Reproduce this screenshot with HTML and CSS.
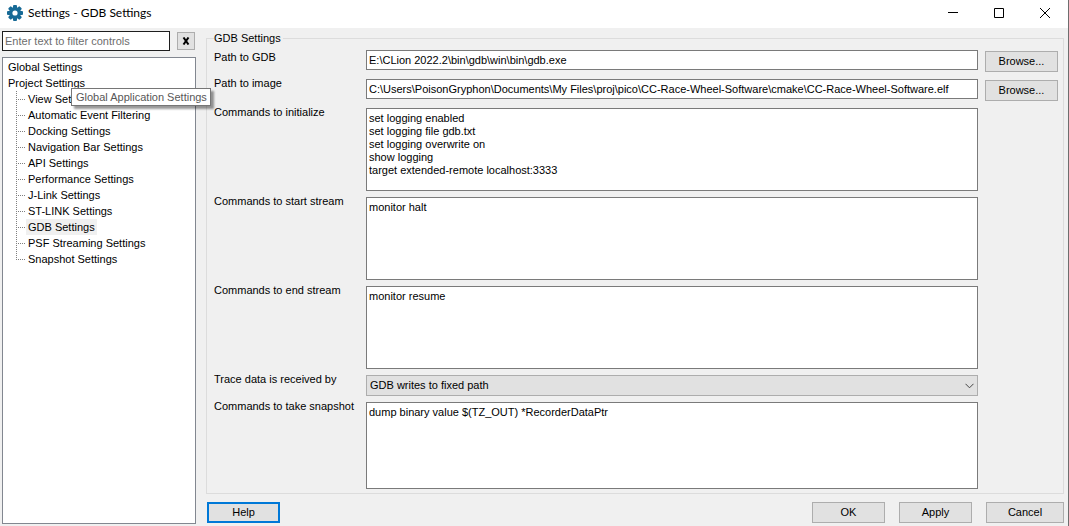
FILE: index.html
```html
<!DOCTYPE html>
<html lang="en">
<head>
<meta charset="utf-8">
<title>Settings - GDB Settings</title>
<link rel="stylesheet" href="styles.css">
</head>
<body>
<div class="window">
  <header class="titlebar">
    <svg class="gear" viewBox="0 0 16 16" aria-hidden="true">
      <g fill="#176a96">
        <rect x="6" y="0" width="4" height="16" rx="1"/>
        <rect x="6" y="0" width="4" height="16" rx="1" transform="rotate(45 8 8)"/>
        <rect x="6" y="0" width="4" height="16" rx="1" transform="rotate(90 8 8)"/>
        <rect x="6" y="0" width="4" height="16" rx="1" transform="rotate(135 8 8)"/>
        <circle cx="8" cy="8" r="6"/>
      </g>
      <circle cx="8" cy="8" r="2.6" fill="#fff"/>
    </svg>
    <h1 class="title">Settings - GDB Settings</h1>
    <div class="caption">
      <button class="caption-button" type="button" aria-label="Minimize"><svg viewBox="0 0 10 10"><path d="M0 4.5H10"/></svg></button>
      <button class="caption-button" type="button" aria-label="Maximize"><svg viewBox="0 0 10 10"><path d="M.5 .5H9.5V9.5H.5Z"/></svg></button>
      <button class="caption-button" type="button" aria-label="Close"><svg viewBox="0 0 10 10"><path d="M0 0L10 10M10 0L0 10"/></svg></button>
    </div>
  </header>
  <div class="content">
    <aside class="sidebar">
      <div class="filter">
        <input class="filter-input" type="text" placeholder="Enter text to filter controls" aria-label="Filter controls">
        <button class="filter-clear" type="button" aria-label="Clear filter"><svg viewBox="0 0 8 8"><path d="M1.5 .5L6.5 7.5M6.5 .5L1.5 7.5"/></svg></button>
      </div>
      <nav class="tree">
        <a class="root" href="#global">Global Settings</a>
        <a class="root" href="#project">Project Settings</a>
        <ul class="branch">
          <li><a href="#view">View Settings</a></li>
          <li><a href="#filtering">Automatic Event Filtering</a></li>
          <li><a href="#docking">Docking Settings</a></li>
          <li><a href="#navigation">Navigation Bar Settings</a></li>
          <li><a href="#api">API Settings</a></li>
          <li><a href="#performance">Performance Settings</a></li>
          <li><a href="#jlink">J-Link Settings</a></li>
          <li><a href="#stlink">ST-LINK Settings</a></li>
          <li><a class="selected" href="#gdb">GDB Settings</a></li>
          <li><a href="#psf">PSF Streaming Settings</a></li>
          <li><a href="#snapshot">Snapshot Settings</a></li>
        </ul>
        <div class="tooltip" role="tooltip">Global Application Settings</div>
      </nav>
    </aside>
    <form class="main">
      <fieldset class="group">
        <legend>GDB Settings</legend>
        <div class="row">
          <label class="label label-first" for="gdb-path">Path to GDB</label>
          <input class="field" id="gdb-path" type="text" value="E:\CLion 2022.2\bin\gdb\win\bin\gdb.exe">
          <button class="button browse" type="button">Browse...</button>
        </div>
        <div class="row">
          <label class="label" for="image-path">Path to image</label>
          <input class="field" id="image-path" type="text" value="C:\Users\PoisonGryphon\Documents\My Files\proj\pico\CC-Race-Wheel-Software\cmake\CC-Race-Wheel-Software.elf">
          <button class="button browse" type="button">Browse...</button>
        </div>
        <div class="row">
          <label class="label" for="init">Commands to initialize</label>
          <textarea class="field area" id="init">set logging enabled
set logging file gdb.txt
set logging overwrite on
show logging
target extended-remote localhost:3333</textarea>
        </div>
        <div class="row">
          <label class="label" for="start">Commands to start stream</label>
          <textarea class="field area" id="start">monitor halt</textarea>
        </div>
        <div class="row">
          <label class="label" for="end">Commands to end stream</label>
          <textarea class="field area" id="end">monitor resume</textarea>
        </div>
        <div class="row">
          <label class="label" for="receive">Trace data is received by</label>
          <div class="select-wrap">
            <select class="select" id="receive"><option>GDB writes to fixed path</option></select>
            <svg class="chevron" viewBox="0 0 9 6"><path d="M.5 .8L4.5 4.8L8.5 .8"/></svg>
          </div>
        </div>
        <div class="row row-grow">
          <label class="label" for="snapshot-cmd">Commands to take snapshot</label>
          <textarea class="field area" id="snapshot-cmd">dump binary value $(TZ_OUT) *RecorderDataPtr</textarea>
        </div>
      </fieldset>
      <div class="actions">
        <button class="button help" type="button">Help</button>
        <button class="button" type="button">OK</button>
        <button class="button" type="button">Apply</button>
        <button class="button cancel" type="button">Cancel</button>
      </div>
    </form>
  </div>
</div>
</body>
</html>
```
FILE: styles.css
```css
* {
  box-sizing: border-box;
}

body {
  margin: 0;
  background: #f0f0f0;
  color: #000;
  font: 11px/13px "Liberation Sans", Arial, sans-serif;
}

button,
input,
select,
textarea {
  margin: 0;
  border-radius: 0;
  color: inherit;
  font: inherit;
}

a {
  color: inherit;
  text-decoration: none;
}

.window {
  display: flex;
  flex-direction: column;
  min-height: 100vh;
  border-right: 1px solid #6e6e6e;
}

.titlebar {
  display: flex;
  align-items: center;
  height: 28px;
  padding: 0 0 3px 7px;
  background: #fff;
}

.gear {
  width: 16px;
  height: 16px;
}

.title {
  flex: 1;
  margin: 0 0 0 5px;
  font: 12px/16px Lato, "Open Sans", sans-serif;
}

.caption {
  display: flex;
}

.caption-button {
  display: grid;
  place-items: center;
  width: 46px;
  height: 24px;
  padding: 0;
  border: 0;
  background: none;
}

.caption-button svg {
  width: 10px;
  height: 10px;
  fill: none;
  stroke: #000;
}

.content {
  display: flex;
  flex: 1;
  gap: 10px;
  padding: 3px 4px 2px 2px;
}

.sidebar {
  display: flex;
  flex-direction: column;
  width: 194px;
  gap: 6px;
}

.filter {
  display: flex;
  align-items: center;
  gap: 7px;
  padding-right: 1px;
}

.filter-input {
  flex: 1;
  min-width: 0;
  height: 20px;
  padding: 0 2px;
  border: 1px solid #1e1e1e;
  background: #fff;
}

.filter-input::placeholder {
  color: #6d6d6d;
  opacity: 1;
}

.filter-clear {
  display: grid;
  place-items: center;
  width: 18px;
  height: 18px;
  padding: 0;
  border: 1px solid #adadad;
  background: #e1e1e1;
}

.filter-clear svg {
  width: 8px;
  height: 8px;
  stroke: #000;
  stroke-width: 2;
}

.tree {
  position: relative;
  flex: 1;
  padding: 1px 5px;
  border: 1px solid #828790;
  background: #fff;
  line-height: 16px;
}

.root {
  display: block;
}

.branch {
  margin: 0 0 0 8px;
  padding: 0;
  list-style: none;
}

.branch li {
  display: flex;
  align-items: center;
  height: 16px;
}

.branch li::before {
  width: 10px;
  height: 16px;
  background:
    repeating-linear-gradient(90deg, #808080 0 1px, transparent 1px 2px) 0 8px / 9px 1px no-repeat,
    repeating-linear-gradient(#808080 0 1px, transparent 1px 2px) 0 0 / 1px 16px no-repeat;
  content: "";
}

.branch li:last-child::before {
  background:
    repeating-linear-gradient(90deg, #808080 0 1px, transparent 1px 2px) 0 8px / 9px 1px no-repeat,
    repeating-linear-gradient(#808080 0 1px, transparent 1px 2px) 0 0 / 1px 8px no-repeat;
}

.branch a {
  padding: 0 2px;
}

.branch .selected {
  background: #f0f0f0;
}

.tooltip {
  position: absolute;
  top: 30px;
  left: 68px;
  padding: 0 3px 0 4px;
  border: 1px solid #767676;
  background: #fff;
  box-shadow: 3px 3px 2px rgba(0, 0, 0, 0.4);
  color: #575757;
  white-space: nowrap;
}

.main {
  display: flex;
  flex: 1;
  flex-direction: column;
  min-width: 0;
  padding-top: 1px;
}

.group {
  display: flex;
  flex: 1;
  flex-direction: column;
  min-width: 0;
  margin: 0;
  padding: 2px 5px 1px 7px;
  border: 1px solid #dcdcdc;
}

.group legend {
  padding: 0 2px 0 0;
}

.row {
  display: grid;
  grid-template-columns: 152px 1fr 73px;
}

.row-grow {
  flex: 1;
}

.label {
  padding-top: 1px;
}

.label-first {
  padding-top: 4px;
}

.field {
  width: calc(100% - 7px);
  height: 20px;
  margin: 3px 0;
  padding: 0 2px;
  border: 1px solid #7a7a7a;
  background: #fff;
}

.area {
  display: block;
  height: 83px;
  padding-top: 3px;
  overflow: hidden;
  resize: none;
}

.row-grow .area {
  height: auto;
  min-height: 83px;
}

.button {
  width: 73px;
  height: 21px;
  padding: 0;
  border: 1px solid #adadad;
  background: #e1e1e1;
}

.browse {
  margin: 4px 0;
}

.select-wrap {
  position: relative;
  margin: 3px 7px 3px 0;
}

.select {
  display: block;
  width: 100%;
  height: 21px;
  padding: 0 20px 0 3px;
  border: 1px solid #adadad;
  appearance: none;
  background: #e1e1e1;
}

.chevron {
  position: absolute;
  top: 8px;
  right: 4px;
  width: 9px;
  height: 6px;
  fill: none;
  pointer-events: none;
  stroke: #444;
}

.actions {
  display: flex;
  gap: 14px;
  padding: 8px 0 1px 1px;
}

.help {
  margin-right: auto;
  border: 2px solid #0078d7;
}

.cancel {
  width: 78px;
}
```
